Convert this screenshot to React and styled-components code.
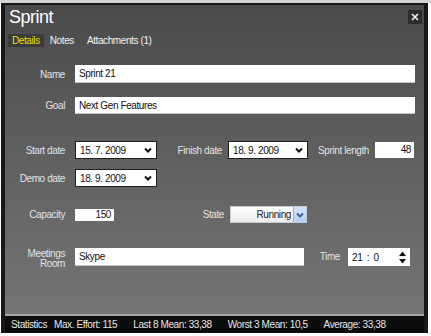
import React from "react";
import styled, { createGlobalStyle } from "styled-components";

const Global = createGlobalStyle`
  html, body {
    margin: 0;
    background: #fff;
  }
  body {
    font-family: "Liberation Sans", Arial, sans-serif;
  }
`;

function Chevron({ color = "#111" }) {
    return (
        <svg width="8" height="6" viewBox="0 0 8 6">
            <path d="M1 1.5 L4 4.5 L7 1.5" fill="none" stroke={color} strokeWidth="2" />
        </svg>
    );
}

function App() {
    return (
        <Page>
            <Global />
            <TopStrip />
            <Window>
                <Header>
                    <Title>Sprint</Title>
                    <Close>
                        <svg width="10" height="10" viewBox="0 0 10 10">
                            <path d="M2 2 L8 8 M8 2 L2 8" stroke="#f4f4f4" strokeWidth="1.6" />
                        </svg>
                    </Close>
                </Header>
                <Tabs>
                    <Tab className="active">Details</Tab>
                    <Tab>Notes</Tab>
                    <Tab $ml={3}>Attachments (1)</Tab>
                </Tabs>
                <Form>
                    <Row $mt={18}>
                        <Label $w={60} $mr={10}>Name</Label>
                        <TextBox $w={340} $h={18}>Sprint 21</TextBox>
                    </Row>
                    <Row $mt={14}>
                        <Label $w={60} $mr={10}>Goal</Label>
                        <TextBox $w={340} $h={17}>Next Gen Features</TextBox>
                    </Row>
                    <Row $mt={27}>
                        <Label $w={60} $mr={10}>Start date</Label>
                        <DateSelect $w={82}>
                            <span>15. 7. 2009</span>
                            <Chevron />
                        </DateSelect>
                        <Label $w={65} $mr={6}>Finish date</Label>
                        <DateSelect $w={80}>
                            <span>18. 9. 2009</span>
                            <Chevron />
                        </DateSelect>
                        <Label $w={61} $mr={6}>Sprint length</Label>
                        <NumBox $w={39} $h={16}>48</NumBox>
                    </Row>
                    <Row $mt={10}>
                        <Label $w={60} $mr={10}>Demo date</Label>
                        <DateSelect $w={82}>
                            <span>18. 9. 2009</span>
                            <Chevron />
                        </DateSelect>
                    </Row>
                    <Row $mt={19}>
                        <Label $w={60} $mr={10}>Capacity</Label>
                        <NumBox $w={39} $h={12}>150</NumBox>
                        <Label $w={110} $mr={6}>State</Label>
                        <StateSelect>
                            <span>Running</span>
                            <DropButton>
                                <Chevron color="#3c62a8" />
                            </DropButton>
                        </StateSelect>
                    </Row>
                    <Row $mt={25} $top>
                        <Label $w={60} $mr={10} $lh={10} $pt={1}>
                            Meetings
                            <br />
                            Room
                        </Label>
                        <TextBox $w={229} $h={18}>Skype</TextBox>
                        <Label $w={36} $mr={8} $lh={18}>Time</Label>
                        <TimeBox>
                            <span>21 : 0</span>
                            <Spinner>
                                <svg width="7" height="13" viewBox="0 0 7 13">
                                    <path d="M3.5 0.5 L7 5 L0 5 Z M0 8 L7 8 L3.5 12.5 Z" fill="#111" />
                                </svg>
                            </Spinner>
                        </TimeBox>
                    </Row>
                </Form>
                <StatusBar>
                    <Stat $mr={7}>Statistics</Stat>
                    <Stat>Max. Effort: 115</Stat>
                    <Stat>Last 8 Mean: 33,38</Stat>
                    <Stat>Worst 3 Mean: 10,5</Stat>
                    <Stat>Average: 33,38</Stat>
                </StatusBar>
            </Window>
        </Page>
    );
}

export default App;

const Page = styled.div`
    width: 431px;
    height: 336px;
    overflow: hidden;
    background: #fff;
`;
const TopStrip = styled.div`
    height: 3px;
    background: #d4d4d4;
`;
const Window = styled.div`
    box-sizing: border-box;
    width: 427px;
    height: 330px;
    margin-left: 1px;
    border: 4px solid #181818;
    border-top-width: 2px;
    border-bottom: 0;
    display: flex;
    flex-direction: column;
    background: linear-gradient(#4a4a4a 0%, #565656 25%, #666 60%, #777 100%);
    font-size: 10px;
    letter-spacing: -0.4px;
`;
const Header = styled.div`
    display: flex;
    justify-content: space-between;
    align-items: flex-start;
    padding: 1px 2px 0 4px;
`;
const Title = styled.h1`
    margin: 0;
    font-size: 18px;
    line-height: 22px;
    font-weight: normal;
    color: #fff;
    letter-spacing: -0.5px;
`;
const Close = styled.div`
    width: 14px;
    height: 14px;
    margin-top: 4px;
    background: #2c2c2c;
    display: flex;
    align-items: center;
    justify-content: center;
`;
const Tabs = styled.div`
    display: flex;
    gap: 2px;
    margin-top: 6px;
    padding-left: 3px;
`;
const Tab = styled.div`
    height: 13px;
    line-height: 13px;
    padding: 0 4px;
    margin-left: ${(p) => p.$ml || 0}px;
    color: #f0f0f0;
    &.active {
        background: #3b3b3b;
        color: #f0dc00;
    }
`;
const Form = styled.div`
    display: flex;
    flex-direction: column;
    flex: 1;
`;
const Row = styled.div`
    display: flex;
    align-items: ${(p) => (p.$top ? "flex-start" : "center")};
    margin-top: ${(p) => p.$mt}px;
`;
const Label = styled.div`
    flex: none;
    width: ${(p) => p.$w}px;
    margin-right: ${(p) => p.$mr}px;
    padding-top: ${(p) => p.$pt || 0}px;
    text-align: right;
    color: #e2e2e2;
    line-height: ${(p) => (p.$lh ? `${p.$lh}px` : "normal")};
`;
const TextBox = styled.div`
    box-sizing: border-box;
    flex: none;
    width: ${(p) => p.$w}px;
    height: ${(p) => p.$h}px;
    line-height: ${(p) => p.$h}px;
    padding-left: 4px;
    background: #fff;
    border-bottom: 1px solid #c8c8c8;
    color: #111;
`;
const NumBox = styled(TextBox)`
    text-align: right;
    padding: 0 3px 0 0;
    border: 0;
`;
const DateSelect = styled.div`
    box-sizing: border-box;
    flex: none;
    width: ${(p) => p.$w}px;
    height: 18px;
    display: flex;
    align-items: center;
    justify-content: space-between;
    padding: 0 4px 0 4px;
    background: #fff;
    border: 1px solid #1e1e1e;
    color: #111;
`;
const StateSelect = styled.div`
    box-sizing: border-box;
    flex: none;
    width: 77px;
    height: 17px;
    display: flex;
    align-items: center;
    justify-content: flex-end;
    gap: 2px;
    background: linear-gradient(#ffffff, #ececec);
    border: 1px solid #c4cbd4;
    color: #222;
`;
const DropButton = styled.div`
    box-sizing: border-box;
    width: 13px;
    height: 15px;
    display: flex;
    align-items: center;
    justify-content: center;
    background: linear-gradient(#d7e5fa, #b7cdf0);
    border-left: 1px solid #8fb0e2;
`;
const TimeBox = styled.div`
    box-sizing: border-box;
    flex: none;
    width: 62px;
    height: 18px;
    display: flex;
    align-items: center;
    justify-content: space-between;
    padding: 0 4px 0 4px;
    background: #fff;
    color: #111;
    word-spacing: 2px;
`;
const Spinner = styled.div`
    display: flex;
    align-items: center;
`;
const StatusBar = styled.div`
    height: 17px;
    border-top: 2px solid #a8a8a8;
    background: #0c0c0c;
    display: flex;
    align-items: center;
    gap: 16px;
    padding-left: 6px;
    color: #e6e6e6;
`;
const Stat = styled.span`
    margin-right: ${(p) => (p.$mr ? p.$mr - 16 : 0)}px;
    white-space: nowrap;
`;
